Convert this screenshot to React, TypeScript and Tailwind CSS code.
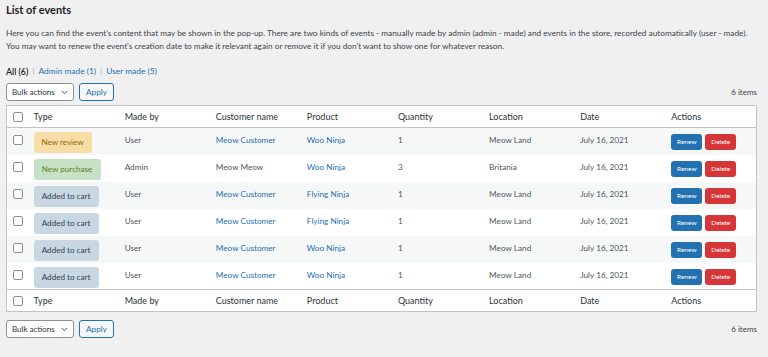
import React from "react";

type EventRow = {
  type: "review" | "purchase" | "cart";
  madeBy: string;
  customer: string;
  customerLink: boolean;
  product: string;
  quantity: number;
  location: string;
  date: string;
};

const events: EventRow[] = [
  { type: "review", madeBy: "User", customer: "Meow Customer", customerLink: true, product: "Woo Ninja", quantity: 1, location: "Meow Land", date: "July 16, 2021" },
  { type: "purchase", madeBy: "Admin", customer: "Meow Meow", customerLink: false, product: "Woo Ninja", quantity: 3, location: "Britania", date: "July 16, 2021" },
  { type: "cart", madeBy: "User", customer: "Meow Customer", customerLink: true, product: "Flying Ninja", quantity: 1, location: "Meow Land", date: "July 16, 2021" },
  { type: "cart", madeBy: "User", customer: "Meow Customer", customerLink: true, product: "Flying Ninja", quantity: 1, location: "Meow Land", date: "July 16, 2021" },
  { type: "cart", madeBy: "User", customer: "Meow Customer", customerLink: true, product: "Woo Ninja", quantity: 1, location: "Meow Land", date: "July 16, 2021" },
  { type: "cart", madeBy: "User", customer: "Meow Customer", customerLink: true, product: "Woo Ninja", quantity: 1, location: "Meow Land", date: "July 16, 2021" },
];

const badgeStyles = {
  review: { label: "New review", cls: "bg-[#f8dda7] text-[#94660c] w-[58px]" },
  purchase: { label: "New purchase", cls: "bg-[#c6e1c6] text-[#5b841b] w-[67px]" },
  cart: { label: "Added to cart", cls: "bg-[#c8d7e1] text-[#2e4453] w-[65px]" },
};

function Checkbox() {
  return <span className="block w-[10px] h-[10px] rounded-[2px] border border-[#8c8f94] bg-white ml-[6px]" />;
}

function BulkBar() {
  return (
    <div className="flex items-center justify-between">
      <div className="flex items-center gap-[5px]">
        <div className="flex items-center justify-between w-[68px] h-[18px] pl-[5px] pr-[5px] border border-[#8c8f94] rounded-[3px] bg-white text-[#2c3338] text-[8px] whitespace-nowrap">
          <span>Bulk actions</span>
          <svg width="7" height="5" viewBox="0 0 7 5" fill="none">
            <path d="M0.8 1 L3.5 3.8 L6.2 1" stroke="#50575e" strokeWidth="1" />
          </svg>
        </div>
        <div className="flex items-center justify-center w-[35px] h-[18px] border border-[#2271b1] rounded-[3px] bg-[#f6f7f7] text-[#2271b1] text-[8.3px]">
          Apply
        </div>
      </div>
      <span className="text-[8px] text-[#3c434a] mr-[5px]">6 items</span>
    </div>
  );
}

function HeaderRow({ top }: { top?: boolean }) {
  const cols = ["Type", "Made by", "Customer name", "Product", "Quantity", "Location", "Date", "Actions"];
  return (
    <tr className={`h-[22px] bg-white ${top ? "border-b" : "border-t"} border-[#c3c4c7]`}>
      <td className="align-middle"><Checkbox /></td>
      {cols.map((c) => (
        <td key={c} className="align-middle text-[#2c3338] text-[9px]">{c}</td>
      ))}
    </tr>
  );
}

export default function App() {
  return (
    <div className="w-[768px] h-[357px] bg-[#f0f0f1] px-[6px] pt-[2px] overflow-hidden" style={{ fontFamily: 'Lato, "Noto Sans", sans-serif' }}>
      <h1 className="text-[11px] font-bold text-[#1d2327] leading-[16px]">List of events</h1>
      <p className="mt-[9px] text-[8.25px] leading-[13px] text-[#3c434a] whitespace-nowrap">
        Here you can find the event's content that may be shown in the pop-up. There are two kinds of events - manually made by admin (admin - made) and events in the store, recorded automatically (user - made).
        <br />
        You may want to renew the event's creation date to make it relevant again or remove it if you don't want to show one for whatever reason.
      </p>
      <div className="mt-[12px] text-[8.4px] leading-[13px] flex items-center gap-[4px]">
        <span className="text-[#1d2327] font-semibold text-[8.8px]">All (6)</span>
        <span className="text-[#a7aaad]">|</span>
        <span className="text-[#2271b1]">Admin made (1)</span>
        <span className="text-[#a7aaad]">|</span>
        <span className="text-[#2271b1]">User made (5)</span>
      </div>
      <div className="mt-[5px]">
        <BulkBar />
      </div>
      <table className="mt-[4px] w-[751px] table-fixed border-collapse border border-[#c3c4c7] bg-white">
        <colgroup>
          <col className="w-[27px]" />
          <col className="w-[91px]" />
          <col className="w-[91px]" />
          <col className="w-[91px]" />
          <col className="w-[91px]" />
          <col className="w-[91px]" />
          <col className="w-[91px]" />
          <col className="w-[91px]" />
          <col className="w-[85px]" />
        </colgroup>
        <thead>
          <HeaderRow top />
        </thead>
        <tbody>
          {events.map((e, i) => {
            const b = badgeStyles[e.type];
            return (
              <tr key={i} className={`h-[27px] ${i % 2 === 0 ? "bg-[#f6f7f7]" : "bg-white"} text-[8.2px] text-[#50575e]`}>
                <td className="align-top pt-[7px]"><Checkbox /></td>
                <td className="align-top pt-[4px]">
                  <span className={`flex items-center justify-center h-[21px] rounded-[3px] text-[8.1px] ${b.cls}`}>{b.label}</span>
                </td>
                <td className="align-top pt-[6px] leading-[13px]">{e.madeBy}</td>
                <td className={`align-top pt-[6px] leading-[13px] ${e.customerLink ? "text-[#2271b1]" : ""}`}>{e.customer}</td>
                <td className="align-top pt-[6px] leading-[13px] text-[#2271b1]">{e.product}</td>
                <td className="align-top pt-[6px] leading-[13px]">{e.quantity}</td>
                <td className="align-top pt-[6px] leading-[13px]">{e.location}</td>
                <td className="align-top pt-[6px] leading-[13px]">{e.date}</td>
                <td className="align-top pt-[6px]">
                  <div className="flex gap-[3px]">
                    <span className="flex items-center justify-center w-[31px] h-[16px] rounded-[3px] bg-[#2271b1] text-white text-[6.5px]">Renew</span>
                    <span className="flex items-center justify-center w-[31px] h-[16px] rounded-[3px] bg-[#d63638] text-white text-[6.5px]">Delete</span>
                  </div>
                </td>
              </tr>
            );
          })}
        </tbody>
        <tfoot>
          <HeaderRow />
        </tfoot>
      </table>
      <div className="mt-[8px]">
        <BulkBar />
      </div>
    </div>
  );
}
